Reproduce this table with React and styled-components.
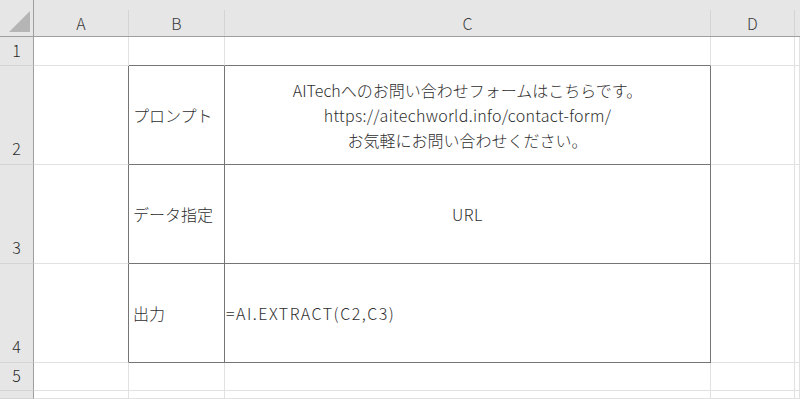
import React from "react";
import styled, { createGlobalStyle } from "styled-components";

const GlobalStyle = createGlobalStyle`
  html, body {
    margin: 0;
    padding: 0;
    background: #ffffff;
  }
  body {
    font-family: "Noto Sans CJK JP", "Noto Sans", sans-serif;
    color: #333;
  }
`;

const HEAD_BG = "#e6e6e6";
const HEAD_EDGE = "#9e9e9e";
const GRID = "#e1e1e1";
const BOX = "#757575";

const Sheet = styled.div`
  display: grid;
  grid-template-columns: 34px 95px 96px 486px 84px 1fr;
  grid-template-rows: 37px 29px 99px 99px 99px 28px 1fr;
  width: 800px;
  height: 399px;
  overflow: hidden;
  background: #fff;
`;

const Corner = styled.div`
  background: ${HEAD_BG};
  border-right: 1px solid ${HEAD_EDGE};
  border-bottom: 1px solid ${HEAD_EDGE};
  display: flex;
  align-items: flex-end;
  justify-content: flex-end;
  padding: 0 2px 4px 0;
`;

const ColHead = styled.div`
  background: ${HEAD_BG};
  border-bottom: 1px solid ${HEAD_EDGE};
  padding-top: 10px;
  display: flex;
`;

const ColLabel = styled.div`
  flex: 1;
  display: flex;
  align-items: center;
  justify-content: center;
  border-right: 1px solid ${props => (props.$last ? "transparent" : "#d4d4d4")};
  font-size: 16px;
  font-weight: 300;
  color: #3a3a3a;
  padding-bottom: 1px;
`;

const RowHead = styled.div`
  background: ${HEAD_BG};
  border-right: 1px solid ${HEAD_EDGE};
  border-bottom: 1px solid #d4d4d4;
  display: flex;
  align-items: flex-end;
  justify-content: center;
  font-size: 16px;
  font-weight: 300;
  color: #2a2a2a;
  padding-bottom: ${props => (props.$tall ? "4px" : "3px")};
`;

const Cell = styled.div`
  border-right: 1px solid ${props => (props.$edgeR ? BOX : GRID)};
  border-bottom: 1px solid ${props => (props.$edgeB ? BOX : GRID)};
  display: flex;
  flex-direction: column;
  justify-content: center;
  align-items: ${props =>
    props.$align === "center" ? "center" : "flex-start"};
  text-align: ${props => props.$align || "left"};
  padding-left: ${props => (props.$align === "center" ? "0" : "4px")};
  font-size: 16px;
  font-weight: 300;
  line-height: 25px;
  color: #2e2e2e;
  white-space: nowrap;
`;

// latin runs are a bit wider in the original sheet font
const Latin = styled.span`
  letter-spacing: ${props => props.$spacing || "0"};
  margin-left: ${props => props.$shift || "0"};
`;

const CornerMark = () => (
  <svg width="22" height="21" viewBox="0 0 22 21">
    <polygon points="21,0 21,21 0,21" fill="#b5b5b5" />
  </svg>
);

const cols = ["A", "B", "C", "D", ""];

export default function App() {
  return (
    <>
      <GlobalStyle />
      <Sheet>
        <Corner>
          <CornerMark />
        </Corner>
        {cols.map((c, i) => (
          <ColHead key={i}>
            <ColLabel $last={i === cols.length - 1}>{c}</ColLabel>
          </ColHead>
        ))}

        {/* row 1 */}
        <RowHead>1</RowHead>
        <Cell />
        <Cell $edgeB />
        <Cell $edgeB />
        <Cell />
        <Cell />

        {/* row 2 */}
        <RowHead $tall>2</RowHead>
        <Cell $edgeR />
        <Cell $edgeR $edgeB>プロンプト</Cell>
        <Cell $edgeR $edgeB $align="center">
          <div>AITechへのお問い合わせフォームはこちらです。</div>
          <div>
            <Latin $spacing="0.3px">https://aitechworld.info/contact-form/</Latin>
          </div>
          <div>お気軽にお問い合わせください。</div>
        </Cell>
        <Cell />
        <Cell />

        {/* row 3 */}
        <RowHead $tall>3</RowHead>
        <Cell $edgeR />
        <Cell $edgeR $edgeB>データ指定</Cell>
        <Cell $edgeR $edgeB $align="center">
          <Latin $spacing="0.6px">URL</Latin>
        </Cell>
        <Cell />
        <Cell />

        {/* row 4 */}
        <RowHead $tall>4</RowHead>
        <Cell $edgeR />
        <Cell $edgeR $edgeB>出力</Cell>
        <Cell $edgeR $edgeB>
          <Latin $spacing="1.5px" $shift="-3px">=AI.EXTRACT(C2,C3)</Latin>
        </Cell>
        <Cell />
        <Cell />

        {/* row 5 */}
        <RowHead>5</RowHead>
        <Cell />
        <Cell />
        <Cell />
        <Cell />
        <Cell />

        {/* row 6 (partly visible) */}
        <RowHead />
        <Cell />
        <Cell />
        <Cell />
        <Cell />
        <Cell />
      </Sheet>
    </>
  );
}
